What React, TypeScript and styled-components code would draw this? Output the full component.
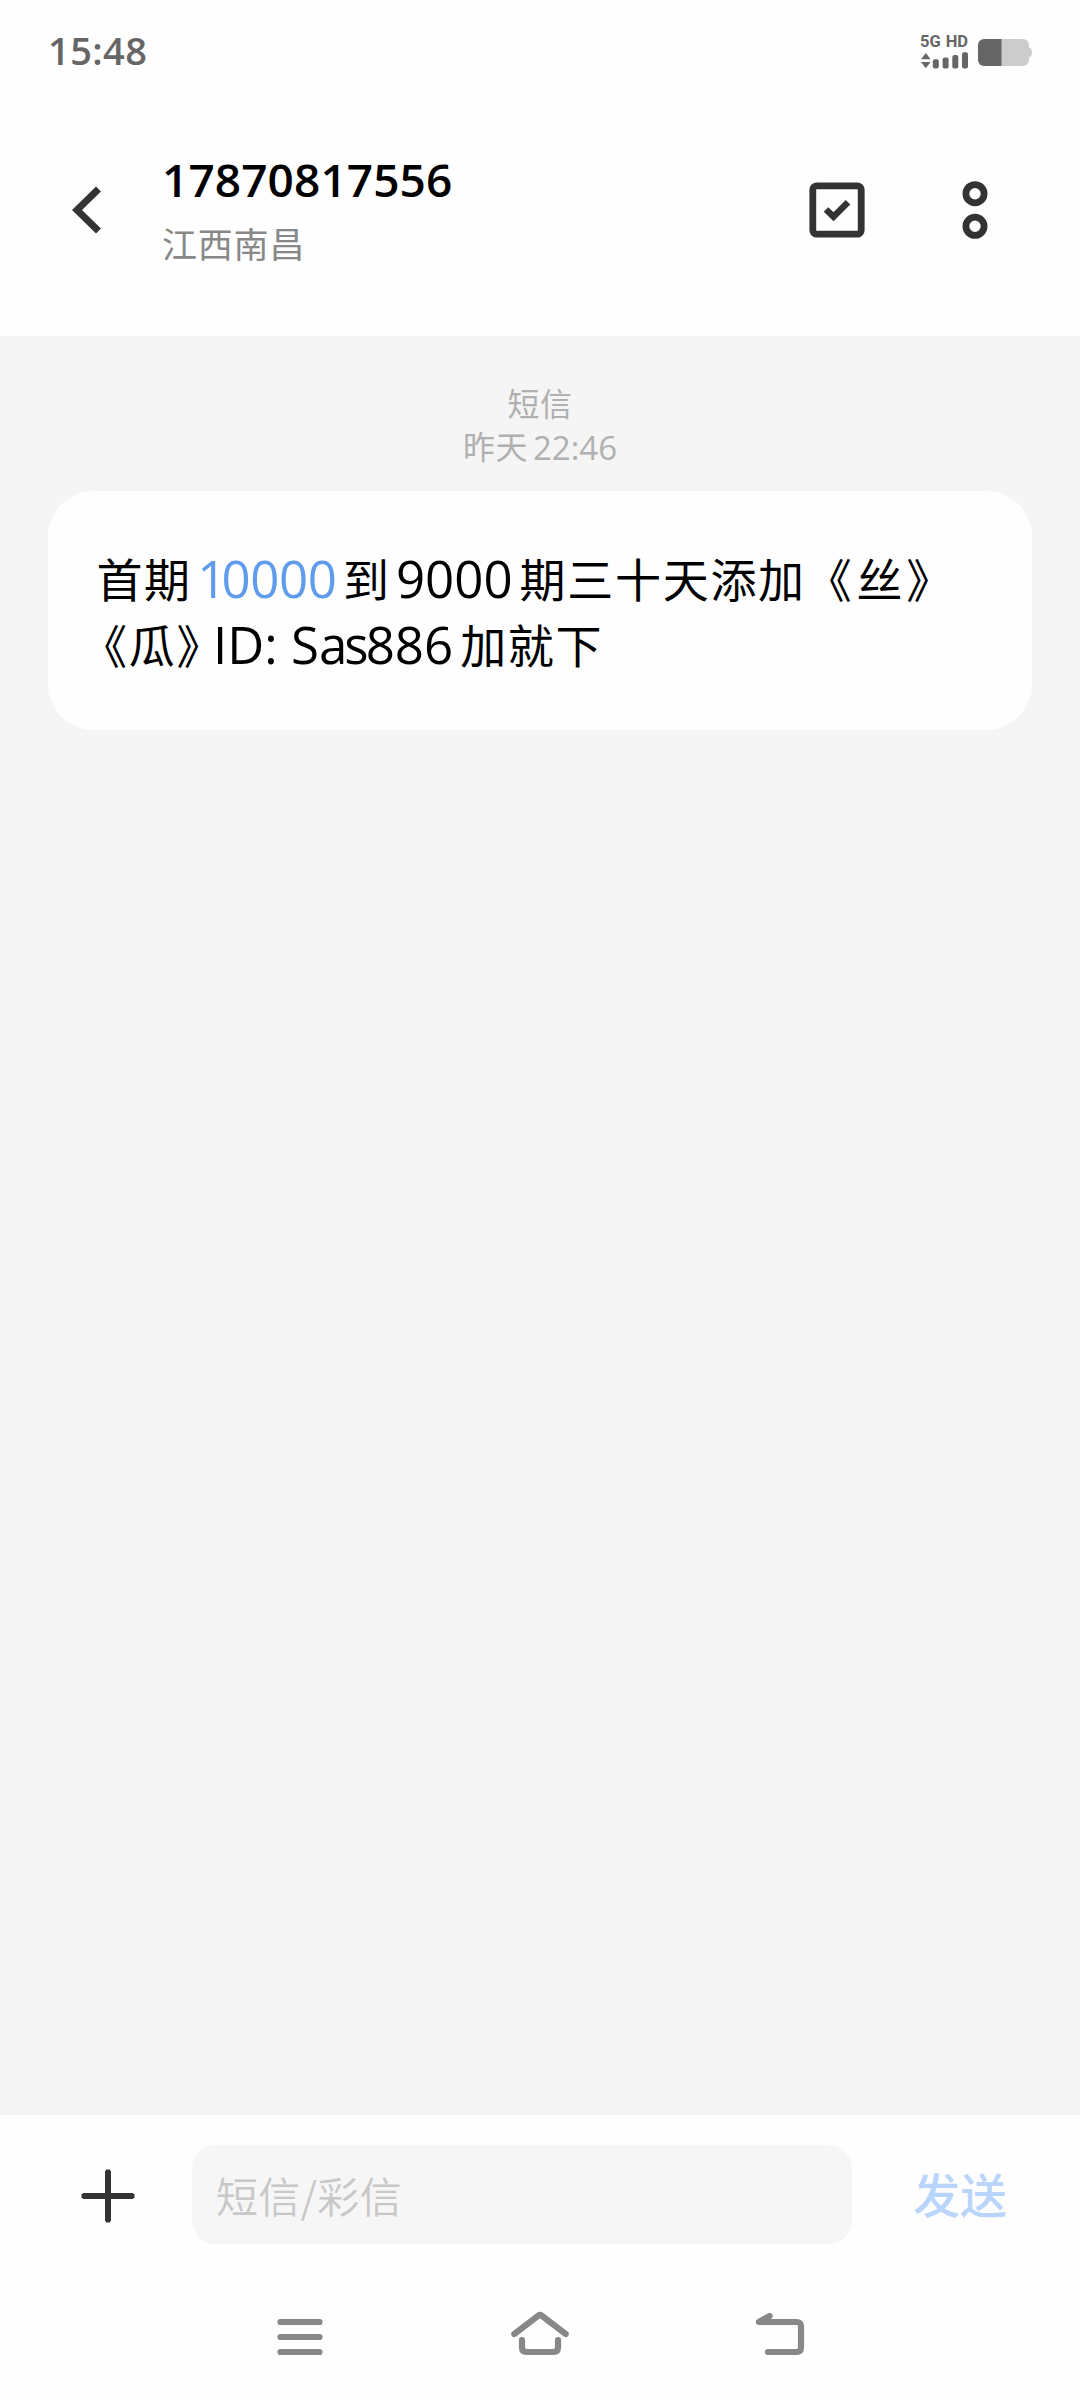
import React from "react";
import styled, { createGlobalStyle } from "styled-components";

const Global = createGlobalStyle`
  html, body { margin: 0; padding: 0; background: #fefefe; }
  * { box-sizing: border-box; }
`;

const latin = `"Open Sans", "Noto Sans CJK SC", sans-serif`;
const cjk = `"Noto Sans CJK SC", sans-serif`;

const Screen = styled.div`
  width: 1080px;
  height: 2400px;
  display: flex;
  flex-direction: column;
  background: #fefefe;
  font-family: ${latin};
  color: #000;
  overflow: hidden;
`;

const StatusBar = styled.header`
  height: 100px;
  padding: 0 48px 0 48px;
  display: flex;
  align-items: center;
  justify-content: space-between;
`;

const Clock = styled.time`
  font: 600 38px/50px "Open Sans", sans-serif;
  letter-spacing: 0.4px;
  color: #666;
`;

const StatusIcons = styled.div`
  display: flex;
  align-items: center;
  gap: 10px;
  padding-top: 4px;
  color: #666;
`;

const Network = styled.div`
  width: 48px;
  display: flex;
  flex-direction: column;
  gap: 4px;
`;

const NetworkLabels = styled.div`
  display: flex;
  justify-content: space-between;
  font: 700 16.5px/13px Roboto, sans-serif;
`;

const TitleBar = styled.div`
  height: 236px;
  padding: 0 92px 16px 70px;
  display: flex;
  align-items: center;
`;

const Contact = styled.div`
  flex: 1;
  display: flex;
  flex-direction: column;
  margin-left: 58px;
  padding-bottom: 3px;
`;

const PhoneNumber = styled.h1`
  margin: 0 0 9px;
  font: 600 46px/60px "Open Sans", sans-serif;
  letter-spacing: 0.1px;
`;

const Region = styled.span`
  font: 400 35px/50px ${cjk};
  letter-spacing: 0.8px;
  color: #888;
`;

const Actions = styled.div`
  display: flex;
  align-items: center;
  gap: 97px;
`;

const Conversation = styled.main`
  height: 1779px;
  padding: 45px 48px 0;
  display: flex;
  flex-direction: column;
  align-items: center;
  background: #f5f5f5;
`;

const Stamp = styled.div`
  height: 43px;
  line-height: 43px;
  white-space: pre;
  color: #b0b0b0;
`;

const Bubble = styled.section`
  width: 984px;
  height: 239px;
  margin-top: 24px;
  padding: 53px 48px;
  background: #fefefe;
  border-radius: 46px;
`;

const Line = styled.p`
  margin: 0;
  height: 66px;
  line-height: 66px;
  white-space: pre;
`;

const Run = styled.span<{ $size: number; $cjk?: boolean; $ls?: number; $gap?: number }>`
  font-family: ${(p) => (p.$cjk ? cjk : latin)};
  font-size: ${(p) => p.$size}px;
  letter-spacing: ${(p) => p.$ls ?? 0}px;
  margin-left: ${(p) => p.$gap ?? 0}px;
  vertical-align: ${(p) => (p.$cjk ? "1px" : "baseline")};
`;

const Link = styled(Run)`
  color: #5f9cec;
`;

const Kern = styled.span<{ $by: number }>`
  letter-spacing: ${(p) => p.$by}px;
`;

const Composer = styled.footer`
  height: 165px;
  padding: 30px 72px 0 80px;
  display: flex;
  align-items: flex-start;
`;

const AddButton = styled.div`
  width: 112px;
  height: 102px;
  display: flex;
  align-items: center;
`;

const Field = styled.div`
  width: 660px;
  height: 99px;
  padding-left: 24px;
  border-radius: 24px;
  background: #f6f6f6;
  font: 350 42px/99px ${cjk};
  letter-spacing: 0.3px;
  color: #c8c8c8;
`;

const Send = styled.div`
  margin-left: 61px;
  font: 500 47px/96px ${cjk};
  color: #bad5fb;
`;

const NavBar = styled.nav`
  height: 120px;
  display: flex;
  justify-content: center;
  padding-top: 28px;
  gap: 180px;
`;

const Icon = styled.svg`
  display: block;
  flex: none;
  fill: none;
`;

const navStroke = { stroke: "#888", strokeWidth: 6.2, strokeLinecap: "round" as const, strokeLinejoin: "round" as const };

export default function App() {
  return (
    <Screen>
      <Global />
      <StatusBar>
        <Clock>15:48</Clock>
        <StatusIcons>
          <Network>
            <NetworkLabels>
              <span>5G</span>
              <span>HD</span>
            </NetworkLabels>
            <Icon width="48" height="17" viewBox="0 0 48 17">
              <g fill="#666">
                <path d="M1 7.3 5.8 1l4.8 6.3zM1 10h9.6l-4.8 6.3z" />
                <rect x="12.8" y="7.3" width="6" height="9.3" rx="2" />
                <rect x="22.6" y="5.6" width="6" height="11" rx="2" />
                <rect x="32.3" y="3" width="6" height="13.6" rx="2" />
                <rect x="42" y="0.2" width="6" height="16.4" rx="2" />
              </g>
            </Icon>
          </Network>
          <Icon width="54" height="27" viewBox="0 0 54 27">
            <path d="M23 0h22a6 6 0 0 1 6 6v2.500q3 1 3 5t-3 5V21a6 6 0 0 1-6 6H23z" fill="#ccc" />
            <path d="M23.500 0H6a6 6 0 0 0-6 6v15a6 6 0 0 0 6 6h17.500z" fill="#666" />
          </Icon>
        </StatusIcons>
      </StatusBar>

      <TitleBar>
        <Icon width="34" height="52" viewBox="0 0 34 52">
          <path d="M28.500 5 7 26l21.500 21" stroke="#333" strokeWidth="7" />
        </Icon>
        <Contact>
          <PhoneNumber>17870817556</PhoneNumber>
          <Region>江西南昌</Region>
        </Contact>
        <Actions>
          <Icon width="56" height="56" viewBox="0 0 56 56">
            <rect x="3.800" y="3.800" width="48.400" height="48.400" rx="4" stroke="#333" strokeWidth="6.800" />
            <path d="m17 27.500 7.500 7.200L39 20.200" stroke="#333" strokeWidth="6.500" />
          </Icon>
          <Icon width="26" height="58" viewBox="0 0 26 58">
            <circle cx="13" cy="12.700" r="9.100" stroke="#333" strokeWidth="6.800" />
            <circle cx="13" cy="45.300" r="9.100" stroke="#333" strokeWidth="6.800" />
          </Icon>
        </Actions>
      </TitleBar>

      <Conversation>
        <Stamp>
          <Run $cjk $size={32} $ls={0.5}>短信</Run>
        </Stamp>
        <Stamp>
          <Run $cjk $size={32} $ls={0.5}>昨天</Run>
          <Run $size={33} $gap={5}>22:46</Run>
        </Stamp>
        <Bubble>
          <Line>
            <Run $cjk $size={46} $ls={1.4} $gap={0.5}>首期</Run>
            <Link $size={51} $gap={6} $ls={-0.4}><Kern $by={-5}>1</Kern>0000</Link>
            <Run $cjk $size={46} $ls={1.4} $gap={6.5}>到</Run>
            <Run $size={51} $gap={5.5}>9000</Run>
            <Run $cjk $size={46} $ls={1.7} $gap={7}>期三十天添加《</Run>
            <Run $cjk $size={46} $ls={1.7} $gap={3}>丝</Run>
            <Run $cjk $size={46} $gap={2}>》</Run>
          </Line>
          <Line>
            <Run $cjk $size={46} $ls={1.7} $gap={-15}>《瓜》</Run>
            <Run $size={51} $gap={-11}>ID: S<Kern $by={-3}>as</Kern>886</Run>
            <Run $cjk $size={46} $ls={1.7} $gap={7}>加就下</Run>
          </Line>
        </Bubble>
      </Conversation>

      <Composer>
        <AddButton>
          <Icon width="56" height="56" viewBox="0 0 56 56">
            <path d="M28 3v50M3 28h50" stroke="#333" strokeWidth="6" />
            <path d="M28 1.500v53M1.500 28h53" stroke="#333" strokeWidth="4.500" />
          </Icon>
        </AddButton>
        <Field>短信/彩信</Field>
        <Send>发送</Send>
      </Composer>

      <NavBar>
        <Icon width="60" height="60" viewBox="270 2308 60 60" {...navStroke}>
          <path d="M280.500 2322h39M280.500 2337h39M280.500 2352h39" />
        </Icon>
        <Icon width="60" height="60" viewBox="510 2308 60 60" {...navStroke}>
          <path d="M514.300 2334 538.500 2315.500q1.500-1.200 3 0L565.700 2334M522 2340v7.500q0 4.500 4.500 4.500h27q4.500 0 4.500-4.500V2340" />
        </Icon>
        <Icon width="60" height="60" viewBox="750 2308 60 60" {...navStroke}>
          <path d="M769.600 2316 758.900 2322H796.500q4.500 0 4.500 4.500v21q0 4.500-4.500 4.500h-28.500" />
        </Icon>
      </NavBar>
    </Screen>
  );
}
